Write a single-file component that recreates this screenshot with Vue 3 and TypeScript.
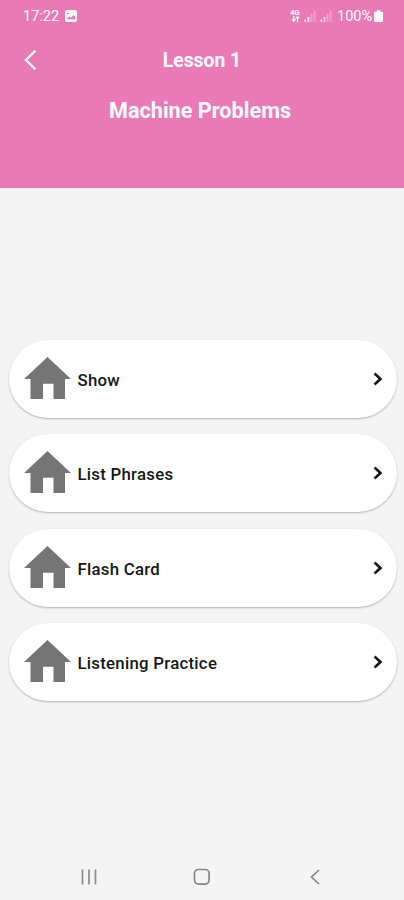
<script setup lang="ts">
interface LessonItem {
  id: number
  label: string
}

const items: LessonItem[] = [
  { id: 1, label: 'Show' },
  { id: 2, label: 'List Phrases' },
  { id: 3, label: 'Flash Card' },
  { id: 4, label: 'Listening Practice' },
]
</script>

<template>
  <div class="screen">
    <header class="header">
      <div class="status">
        <span class="clock">17:22</span>
        <svg class="picture" width="12" height="12" viewBox="0 0 12 12">
          <rect width="12" height="12" rx="2" fill="#fff" />
          <path d="M1.8 8.8 4.3 6.4l1.8 1.1 2.4-2.6 1.8 2v2.3H1.8z" fill="#ea79b8" />
          <path d="M2 3.5h2" stroke="#ea79b8" />
        </svg>
        <span class="grow"></span>
        <span class="network"><b>4G</b>
          <svg width="9" height="6" viewBox="0 0 9 6" fill="none" stroke="#fff" stroke-width="1.2">
            <path d="M2.8 0v5M1 3.3l1.8 2 1.8-2M6.5 6V1M4.8 2.6l1.7-2 1.7 2" />
          </svg>
        </span>
        <svg v-for="n in 2" :key="n" class="signal" width="12" height="12" viewBox="0 0 12 12">
          <path d="M.5 9.5h1.6V12H.5zM3.6 7h1.8v5H3.6z" :fill="n === 1 ? '#fff' : '#ffffffb0'" />
          <path d="M6.6 4h1.8v8H6.6zM9.7 1h1.8v11H9.7z" fill="#fff" opacity=".3" />
        </svg>
        <span class="percent">100%</span>
        <svg class="battery" width="9" height="12" viewBox="0 0 9 12">
          <path d="M3 0h3v1.5h1.2C8.3 1.5 9 2.2 9 3.3V10.5Q9 12 7.5 12h-6Q0 12 0 10.5V3.3C0 2.2.7 1.5 1.8 1.5H3z" fill="#fff" />
        </svg>
      </div>
      <div class="toolbar">
        <svg class="back" width="14" height="22" viewBox="0 0 14 22">
          <path d="M11.5 1.5 2 11l9.5 9.5" fill="none" stroke="#fff" stroke-width="2.4" />
        </svg>
        <h1>Lesson 1</h1>
      </div>
      <h2>Machine Problems</h2>
    </header>

    <main class="list">
      <button v-for="item in items" :key="item.id" class="card" type="button">
        <svg class="home" width="47" height="42" viewBox="0 0 47 42">
          <path d="M23.5 0 47 22H41V42H29.5V26.7H19V42H6.5V22H0z" fill="#757575" />
        </svg>
        <span class="label">{{ item.label }}</span>
        <svg class="chevron" width="10" height="14" viewBox="0 0 10 14">
          <path d="M1.5 1.5 7.5 7l-6 5.5" fill="none" stroke="#111" stroke-width="2.5" />
        </svg>
      </button>
    </main>

    <nav class="nav">
      <svg width="16" height="16" viewBox="0 0 16 16">
        <path d="M1.5 .5v15M8 .5v15M14.5 .5v15" stroke="#8b8b8b" stroke-width="1.7" />
      </svg>
      <svg width="18" height="18" viewBox="0 0 18 18">
        <rect x="1.5" y="1.5" width="14.6" height="14.6" rx="4" fill="none" stroke="#858585" stroke-width="1.7" />
      </svg>
      <svg width="16" height="16" viewBox="0 0 16 16">
        <path d="M12 1 4.5 8l7.5 7" fill="none" stroke="#808080" stroke-width="1.6" />
      </svg>
    </nav>
  </div>
</template>

<style>
body {
  background: #f4f4f4;
}
</style>

<style scoped>
.screen {
  box-sizing: border-box;
  display: flex;
  flex-direction: column;
  width: 100%;
  height: 900px;
  overflow: hidden;
  background: #f4f4f4;
  font-family: Roboto, "Liberation Sans", sans-serif;
}
.header {
  flex: none;
  height: 187.5px;
  background: #ea79b8;
  color: #fff;
}
.status {
  display: flex;
  align-items: center;
  box-sizing: border-box;
  height: 31px;
  padding: 0 21px 0 23px;
}
.clock,
.percent {
  padding-top: 2px;
  font-size: 14.5px;
  line-height: 18px;
}
.clock {
  width: 36px;
}
.picture {
  margin-left: 6px;
}
.grow {
  flex: 1;
}
.network {
  display: flex;
  flex-direction: column;
  align-items: center;
  width: 10px;
  font-size: 7.5px;
  line-height: 7px;
}
.signal {
  margin-left: 4px;
}
.percent {
  margin-left: 5px;
  width: 36px;
}
.battery {
  margin-left: 1px;
}
.toolbar {
  display: grid;
  grid-template-columns: 40px 1fr 40px;
  align-items: center;
  height: 59px;
}
.back {
  margin-left: 23.5px;
  margin-top: -1px;
}
h1,
h2 {
  margin: 0;
  text-align: center;
  font-weight: 700;
}
h1 {
  font-size: 19.35px;
  line-height: 24px;
}
h2 {
  margin-top: 7px;
  padding-right: 4px;
  font-size: 21.65px;
  line-height: 28px;
}
.list {
  display: flex;
  flex-direction: column;
  gap: 16.5px;
  padding: 152.25px 7.5px 0 9px;
}
.card {
  display: flex;
  align-items: center;
  height: 78px;
  padding: 0 14px 0 15px;
  border: 0;
  border-radius: 39px;
  background: #fff;
  box-shadow: 0 1px 2px rgba(0, 0, 0, 0.27);
  font-family: inherit;
  text-align: left;
}
.home {
  flex: none;
  margin-top: -2px;
}
.label {
  flex: 1;
  margin-left: 6.5px;
  padding-top: 2px;
  color: #161616;
  font-size: 16.8px;
  font-weight: 500;
  line-height: 20px;
  letter-spacing: 0.26px;
}
.nav {
  display: flex;
  justify-content: space-between;
  align-items: center;
  height: 46px;
  margin-top: auto;
  padding: 0 81px 0 81px;
}
</style>
